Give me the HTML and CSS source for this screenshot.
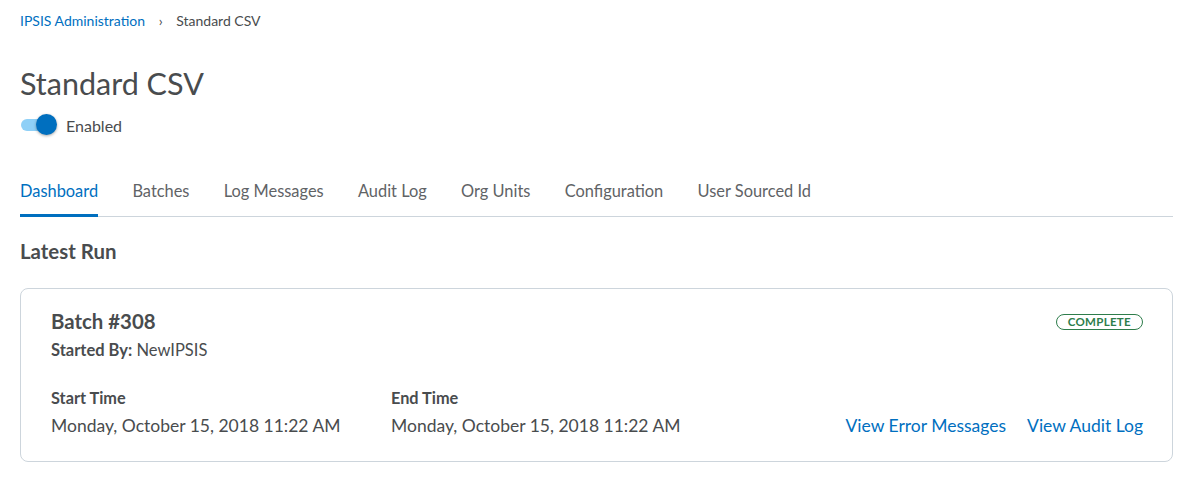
FILE: index.html
```html
<!DOCTYPE html>
<html>
  <head>
    <title>Standard CSV</title>
    <link rel="stylesheet" href="styles.css">
  </head>
  <body>
    <nav class="breadcrumb">
      <a href="#">IPSIS Administration</a>
      <span class="sep">&rsaquo;</span>
      <span>Standard CSV</span>
    </nav>

    <h1>Standard CSV</h1>
    <div class="switch">
      <span class="track"><span class="knob"></span></span>
      <span class="switch-label">Enabled</span>
    </div>

    <div class="tabs">
      <button class="tab active">Dashboard</button>
      <button class="tab">Batches</button>
      <button class="tab">Log Messages</button>
      <button class="tab">Audit Log</button>
      <button class="tab">Org Units</button>
      <button class="tab">Configuration</button>
      <button class="tab">User Sourced Id</button>
    </div>

    <h2>Latest Run</h2>
    <div class="card">
      <div class="card-top">
        <div>
          <div class="batch">Batch #308</div>
          <div class="started"><b>Started By:</b> NewIPSIS</div>
        </div>
        <span class="badge">COMPLETE</span>
      </div>
      <div class="card-bottom">
        <div class="time">
          <div class="time-label">Start Time</div>
          <div class="time-value">Monday, October 15, 2018 11:22 AM</div>
        </div>
        <div class="time">
          <div class="time-label">End Time</div>
          <div class="time-value">Monday, October 15, 2018 11:22 AM</div>
        </div>
        <div class="links">
          <a href="#">View Error Messages</a>
          <a href="#">View Audit Log</a>
        </div>
      </div>
    </div>
  </body>
</html>
```

FILE: styles.css
```css
body {
  margin: 0;
  padding: 0 18px 0 20px;
  font-family: Lato, "Open Sans", sans-serif;
  color: #494c4e;
  background: #ffffff;
}

a {
  color: #006fbf;
  text-decoration: none;
}

/* breadcrumb at the top */
.breadcrumb {
  font-size: 14px;
  padding-top: 12px;
  line-height: 18px;
}
.breadcrumb .sep {
  margin: 0 10px;
  color: #494c4e;
}

h1 {
  margin: 33px 0 0 0;
  font-size: 30.5px;
  font-weight: 400;
  line-height: 40px;
}

/* toggle switch */
.switch {
  display: flex;
  align-items: center;
  margin-top: 10px;
  height: 24px;
}
.track {
  position: relative;
  width: 32px;
  height: 12px;
  border-radius: 6px;
  background: #8fd0f7;
  margin-left: 1px;
}
.knob {
  position: absolute;
  left: 15px;
  top: -5px;
  width: 21px;
  height: 21px;
  border-radius: 50%;
  background: #006fbf;
  box-shadow: 0 1px 3px rgba(0, 0, 0, 0.35);
}
.switch-label {
  margin-left: 13px;
  font-size: 16px;
}

/* tabs */
.tabs {
  display: flex;
  gap: 34.3px;
  margin-top: 44px;
  border-bottom: 1px solid #cdd5dc;
}
.tab {
  background: none;
  border: none;
  border-bottom: 3px solid transparent;
  padding: 0 0 13px 0;
  margin-bottom: -1px;
  font-family: inherit;
  font-size: 16.4px;
  line-height: 20px;
  color: #5f6366;
  cursor: pointer;
}
.tab.active {
  color: #006fbf;
  border-bottom-color: #006fbf;
}

h2 {
  margin: 22px 0 0 0;
  font-size: 20.4px;
  font-weight: 700;
  line-height: 24px;
}

/* latest run card */
.card {
  margin-top: 25px;
  border: 1px solid #cdd5dc;
  border-radius: 8px;
  padding: 19px 29px 24px 30px;
}
.card-top {
  display: flex;
  justify-content: space-between;
  align-items: flex-start;
}
.batch {
  font-size: 20.4px;
  font-weight: 700;
  line-height: 26px;
}
.started {
  font-size: 16.5px;
  line-height: 20px;
  margin-top: 6px;
}
.badge {
  margin-top: 6px;
  font-size: 11.5px;
  font-weight: 700;
  line-height: 14px;
  color: #2e7d4b;
  border: 1px solid #2e7d4b;
  border-radius: 9px;
  padding: 0 11px;
  letter-spacing: 0.3px;
}
.card-bottom {
  display: flex;
  align-items: flex-end;
  margin-top: 28px;
}
.time {
  width: 340px;
}
.time-label {
  font-size: 16.3px;
  font-weight: 700;
  line-height: 20px;
}
.time-value {
  font-size: 17.5px;
  line-height: 22px;
  margin-top: 7px;
}
.links {
  margin-left: auto;
  display: flex;
  gap: 21px;
  font-size: 17.5px;
  line-height: 22px;
}
```
